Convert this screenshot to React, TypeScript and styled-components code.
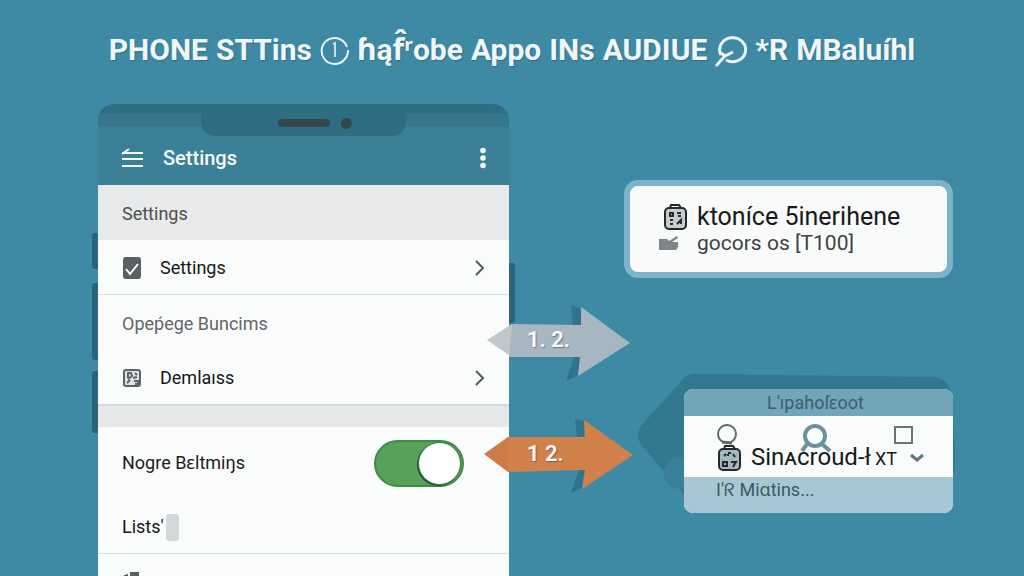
import React from "react";
import styled, { createGlobalStyle } from "styled-components";

const GlobalStyle = createGlobalStyle`
  *, *::before, *::after { box-sizing: border-box; }
  body {
    margin: 0;
    background: #3e8aa5;
    font-family: Roboto, "Noto Sans", "DejaVu Sans", sans-serif;
  }
  button, input { font: inherit; }
`;

const Page = styled.div`
  height: 100vh;
  overflow: hidden;
  display: flex;
  flex-direction: column;
`;

const Title = styled.h1`
  margin: 0;
  height: 104px;
  flex: none;
  padding: 30px 0 0;
  display: flex;
  justify-content: center;
  gap: 8px;
  color: #f0f5f6;
  font-size: 30px;
  line-height: 40px;
  font-weight: 700;
  white-space: nowrap;
  text-shadow: 1px 1px 1px #2b6f88;

  svg { flex: none; margin-top: 6px; }
`;

const Main = styled.main`
  flex: 1;
  min-height: 0;
  display: grid;
  grid-template-columns: 411fr 329fr;
  column-gap: 115px;
  padding: 0 71px 0 98px;
`;

const PhoneColumn = styled.div`
  position: relative;
  min-height: 0;
`;

const Phone = styled.section`
  height: 100%;
  display: flex;
  flex-direction: column;
  border-radius: 16px 16px 0 0;
  overflow: hidden;
  background: #3c8097;
`;

const Screen = styled.div`
  flex: 1;
  display: flex;
  flex-direction: column;
  background: #fafbfb;
`;

const SideKey = styled.span<{ $side: "left" | "right"; $top: number; $length: number }>`
  position: absolute;
  ${(p) => p.$side}: -6px;
  top: ${(p) => p.$top}px;
  width: 6px;
  height: ${(p) => p.$length}px;
  border-radius: ${(p) => (p.$side === "left" ? "3px 0 0 3px" : "0 3px 3px 0")};
  background: #2a657a;
`;

const Bezel = styled.div`
  height: 32px;
  flex: none;
  display: flex;
  justify-content: center;
  background: linear-gradient(#2f6d83 0 9px, #37778d 10px 22px, #3c8097 24px);
`;

const Notch = styled.div`
  width: 50%;
  height: 32px;
  display: flex;
  align-items: center;
  justify-content: center;
  gap: 11px;
  padding: 6px 0 0 22px;
  border-radius: 0 0 14px 14px;
  background: #2f6d83;
`;

const Speaker = styled.span`
  width: 52px;
  height: 8px;
  border-radius: 4px;
  background: #36474b;
`;

const Camera = styled.span`
  width: 11px;
  height: 11px;
  border-radius: 50%;
  background: #36474b;
`;

const AppBar = styled.header`
  height: 49px;
  flex: none;
  display: flex;
  align-items: center;
  padding: 0 20px 6px 23px;
  background: #3c8097;
  color: #f4f8f9;
`;

const IconButton = styled.button`
  display: flex;
  padding: 0;
  border: 0;
  background: none;
  color: inherit;
`;

const AppTitle = styled.h2`
  flex: 1;
  margin: 0 0 0 19px;
  font-size: 20px;
  line-height: 24px;
  font-weight: 500;
`;

const SectionLabel = styled.h3<{ $shaded?: boolean }>`
  margin: 0;
  height: 55px;
  flex: none;
  padding: 17px 24px 0;
  background: ${(p) => (p.$shaded ? "#e7e9ea" : "transparent")};
  color: ${(p) => (p.$shaded ? "#4c5052" : "#636668")};
  font-size: 18px;
  line-height: 24px;
  font-weight: 400;
`;

const Row = styled.button`
  height: 54px;
  flex: none;
  display: flex;
  align-items: center;
  gap: 18px;
  padding: 2px 23px 0 24px;
  border: 0;
  background: none;
  color: #151818;
  font-size: 18px;
  line-height: 24px;
  text-align: left;

  svg { flex: none; }
`;

const RowText = styled.span`
  flex: 1;
`;

const Rule = styled.hr`
  width: 100%;
  height: 1px;
  flex: none;
  margin: 0;
  border: 0;
  background: #dcdfe0;
`;

const Band = styled.div`
  height: 23px;
  flex: none;
  border-top: 2px solid #d5d8da;
  background: #e5e7e8;
`;

const SwitchRow = styled.label`
  height: 72px;
  flex: none;
  display: flex;
  align-items: center;
  justify-content: space-between;
  padding: 0 45px 0 24px;
  color: #1d2020;
  font-size: 18px;
  line-height: 24px;
`;

const Switch = styled.input`
  appearance: none;
  width: 90px;
  height: 47px;
  margin: 0;
  padding: 1px;
  display: flex;
  justify-content: flex-end;
  border: 2px solid #3f8b49;
  border-radius: 24px;
  background: #58a15b;

  &::before {
    content: "";
    width: 43px;
    height: 43px;
    margin-top: -1px;
    border: 1px solid #327a3c;
    border-radius: 50%;
    background: #fdfefe;
    box-shadow: -1px 1px 0 #23502b;
  }
`;

const Handle = styled.span`
  width: 13px;
  height: 27px;
  border-radius: 3px;
  background: #d3d9db;
`;

const ListRow = styled(Row)`
  gap: 2px;
`;

const Arrow = styled.div<{ $top: number }>`
  position: absolute;
  left: calc(100% - 25px);
  top: ${(p) => p.$top}px;
  width: 150px;
  height: 80px;

  svg { display: block; }
`;

const ArrowText = styled.span`
  position: absolute;
  left: 43px;
  top: 22px;
  color: #fbfbfb;
  font-size: 22px;
  line-height: 26px;
  font-weight: 600;
  white-space: pre;
  text-shadow: 1px 1px 1px rgba(50, 60, 70, 0.5);
`;

const Side = styled.aside`
  display: flex;
  flex-direction: column;
  padding-top: 76px;
`;

const InfoCard = styled.section`
  height: 98px;
  display: grid;
  grid-template-columns: 30px 1fr;
  column-gap: 8px;
  align-content: start;
  align-items: center;
  padding: 17px 20px 0 29px;
  border: 6px solid #7bb4ca;
  border-radius: 14px;
  background: #f9fafa;
  white-space: nowrap;

  svg:first-child { justify-self: end; }
`;

const CardTitle = styled.strong`
  color: #17191a;
  font-size: 25px;
  line-height: 28px;
  font-weight: 400;
`;

const CardText = styled.span`
  color: #3d4245;
  font-size: 21px;
  line-height: 24px;
`;

const Popup = styled.section`
  position: relative;
  margin: 111px 0 0 60px;
`;

const PopupShade = styled.svg`
  position: absolute;
  left: -47px;
  top: -16px;
`;

const PopupPanel = styled.div`
  position: relative;
  border-radius: 9px;
  overflow: hidden;
  background: #fafbfb;
`;

const PopupHead = styled.div`
  height: 27px;
  padding-right: 6px;
  background: #72a5b8;
  color: #3b5f6d;
  font-size: 18px;
  line-height: 27px;
  text-align: center;
`;

const PopupIcons = styled.div`
  height: 27px;
  display: flex;
  align-items: flex-start;
  justify-content: space-between;
  padding: 8px 39px 0 32px;

  svg { overflow: visible; }
`;

const PopupChoice = styled.button`
  width: 100%;
  height: 34px;
  display: flex;
  align-items: center;
  padding: 0 29px 4px 33px;
  border: 0;
  background: none;
  color: #17191a;
  font-size: 24px;
  line-height: 28px;
  white-space: nowrap;
`;

const ChoiceText = styled.span`
  flex: 1;
  margin-left: 8px;
  text-align: left;

  small { margin-left: 4px; font-size: 18px; }
`;

const PopupFoot = styled.div`
  height: 36px;
  padding: 1px 32px 0;
  background: #a6c7d3;
  color: #3c5965;
  font-size: 18px;
  line-height: 24px;
`;

const InfoIcon = () => (
  <svg width="29" height="29" viewBox="0 0 29 29" fill="none" stroke="#eaf3f5">
    <path d="M27 11A13 13 0 1 0 24 24A13 13 0 0 0 28 14" strokeWidth="2" />
    <path d="M13 8l2-1v14" strokeWidth="2" stroke="#c9dfe6" />
  </svg>
);

const TitleSearch = () => (
  <svg width="32" height="32" viewBox="0 0 32 32" fill="none" stroke="#eef5f6" strokeWidth="3">
    <path d="M6 19A13 12 0 1 1 11 24" strokeWidth="3" />
    <path d="M1 30L9 21M6 17l4 3 8-4" />
  </svg>
);

const MenuIcon = () => (
  <svg width="23" height="20" viewBox="0 0 23 20" fill="none" stroke="currentColor" strokeWidth="2">
    <path d="M1 6L8 1M1 5h21M1 11h21M1 18h21" />
  </svg>
);

const MoreIcon = () => (
  <svg width="12" height="22" viewBox="0 0 12 22" fill="currentColor">
    <circle cx="6" cy="3.5" r="2.8" />
    <circle cx="6" cy="11" r="2.8" />
    <circle cx="6" cy="18.5" r="2.8" />
  </svg>
);

const CheckIcon = () => (
  <svg width="20" height="24" viewBox="0 0 20 24">
    <rect x="1" y="1" width="18" height="22" rx="3" fill="#596163" />
    <path d="M4 13l4 5 8-10" fill="none" stroke="#fff" strokeWidth="2" />
  </svg>
);

const PictureIcon = () => (
  <svg width="20" height="20" viewBox="0 0 20 20" fill="none" stroke="#5c6466">
    <rect x="2" y="2" width="16" height="16" rx="2" strokeWidth="2" fill="#dfe3e4" />
    <path d="M5 5h4l1 3-4 3M6 5v5M13 5l2 2M11 10l4-1M12 13h4v3h-3M5 15l3-3" strokeWidth="2" />
  </svg>
);

const Chevron = () => (
  <svg width="12" height="16" viewBox="0 0 12 16" fill="none" stroke="#555a5c" strokeWidth="2">
    <path d="M2 1l7 7-7 7" />
  </svg>
);

const CornerIcon = () => (
  <svg width="20" height="20" viewBox="0 0 20 20" fill="#596163">
    <path d="M8 0h9v20H8zM2 3l4-1v18H2z" />
  </svg>
);

const TagIcon = ({ eyes }: { eyes?: boolean }) => (
  <svg width="26" height="28" viewBox="0 0 26 28" fill="none" stroke="#26292a">
    <path d="M7 5l1-3h8l2 3" strokeWidth="2" />
    <rect x="2" y="5" width="21" height="21" rx="4" strokeWidth="2" fill={eyes ? "#a3b7c0" : "#c7cccf"} />
    {eyes ? (
      <path d="M7 12l2-2M11 9h3M11 12v-2M16 10l2 3M6 18h4v4H6zM14 18h5l-3 5" strokeWidth="2" />
    ) : (
      <path d="M7 10h3v3H7zM14 10h4M15 13h3M7 17h3M7 21h3M14 21l4-4v4" strokeWidth="2" />
    )}
  </svg>
);

const HandIcon = () => (
  <svg width="20" height="14" viewBox="0 0 20 14" fill="#7d8588">
    <path d="M0 3h8l2 2 8-5 1 2-6 4h6v5l-2 3H0z" />
  </svg>
);

const arrows = {
  grey: {
    fill: "#a7b7c1",
    tail: "#bfc7cb",
    outline: "M28 19L97 20V2L146 38L94 71L96 52L25 52Z",
    tip: "M3 35L28 19V52Z",
    shade: "M87 0L97 4V20H89ZM90 52H96L94 70L82 76Z",
  },
  orange: {
    fill: "#d08049",
    tail: "#cb7b45",
    outline: "M23 18L101 18L100 1L149 36L98 70L101 51L24 53Z",
    tip: "M0 35L24 18V53Z",
    shade: "M91 0L100 2V18H93ZM95 51H101L98 69L87 74Z",
  },
};

const StepArrow = ({ kind, top, children }: { kind: keyof typeof arrows; top: number; children: string }) => {
  const a = arrows[kind];
  return (
    <Arrow $top={top}>
      <svg width="150" height="80" viewBox="0 0 150 80">
        <path d={a.shade} fill="#2f748c" />
        <path d={a.tip} fill={a.tail} />
        <path d={a.outline} fill={a.fill} />
      </svg>
      <ArrowText>{children}</ArrowText>
    </Arrow>
  );
};

export default function App() {
  return (
    <Page>
      <GlobalStyle />
      <Title>
        <span>PHONE</span>
        <span>STTins</span>
        <InfoIcon />
        <span>ɦąf̂ʳobe</span>
        <span>Appo</span>
        <span>INs</span>
        <span>AUDIUE</span>
        <TitleSearch />
        <span>*R</span>
        <span>MBaluíhl</span>
      </Title>
      <Main>
        <PhoneColumn>
          <SideKey $side="left" $top={129} $length={36} />
          <SideKey $side="left" $top={179} $length={77} />
          <SideKey $side="left" $top={267} $length={62} />
          <SideKey $side="right" $top={159} $length={60} />
          <Phone>
            <Bezel>
              <Notch>
                <Speaker />
                <Camera />
              </Notch>
            </Bezel>
            <AppBar>
              <IconButton aria-label="Menu"><MenuIcon /></IconButton>
              <AppTitle>Settings</AppTitle>
              <IconButton aria-label="More"><MoreIcon /></IconButton>
            </AppBar>
            <Screen>
              <SectionLabel $shaded>Settings</SectionLabel>
              <Row>
                <CheckIcon />
                <RowText>Settings</RowText>
                <Chevron />
              </Row>
              <Rule />
              <SectionLabel>Opeṕege Buncims</SectionLabel>
              <Row>
                <PictureIcon />
                <RowText>Demlaıss</RowText>
                <Chevron />
              </Row>
              <Band />
              <SwitchRow>
                Nogre Bɛltmiŋs
                <Switch type="checkbox" role="switch" defaultChecked />
              </SwitchRow>
              <ListRow>
                Lists'
                <Handle />
              </ListRow>
              <Rule />
              <Row aria-label="More settings">
                <CornerIcon />
              </Row>
            </Screen>
          </Phone>
          <StepArrow kind="grey" top={201}>1. 2.</StepArrow>
          <StepArrow kind="orange" top={315}>1 2.</StepArrow>
        </PhoneColumn>
        <Side>
          <InfoCard>
            <TagIcon />
            <CardTitle>ktoníce 5inerihene</CardTitle>
            <HandIcon />
            <CardText>gocors os [T100]</CardText>
          </InfoCard>
          <Popup>
            <PopupShade width="320" height="140" viewBox="0 0 320 140">
              <path
                d="M57 1L298 4Q312 6 314 20L318 76V98H300L56 132L4 72Q-2 62 4 53L44 8Q49 1 57 1Z"
                fill="#327890"
              />
              <circle cx="43" cy="100" r="16" fill="#3a8099" />
            </PopupShade>
            <PopupPanel>
              <PopupHead>L'ıpahoſɛoot</PopupHead>
              <PopupIcons>
                <svg width="22" height="22" viewBox="0 0 22 22" fill="none" stroke="#62696c">
                  <circle cx="11" cy="10" r="9" strokeWidth="2" />
                  <path d="M6 18l10 1" strokeWidth="3" />
                </svg>
                <svg width="32" height="28" viewBox="0 0 32 28" fill="none" stroke="#6d909d">
                  <circle cx="15" cy="12" r="10" strokeWidth="4" />
                  <path d="M7 20l-5 7M22 20l8 7" strokeWidth="4" />
                </svg>
                <svg width="20" height="20" viewBox="0 0 20 20" fill="none" stroke="#6b7376">
                  <rect x="1" y="3" width="17" height="16" strokeWidth="2" />
                </svg>
              </PopupIcons>
              <PopupChoice>
                <TagIcon eyes />
                <ChoiceText>Sinᴀcroud-ł<small>XT</small></ChoiceText>
                <svg width="14" height="10" viewBox="0 0 14 10" fill="none" stroke="#5f7880" strokeWidth="3">
                  <path d="M1 2l6 5 6-5" />
                </svg>
              </PopupChoice>
              <PopupFoot>I'ᖇ Miɑtins...</PopupFoot>
            </PopupPanel>
          </Popup>
        </Side>
      </Main>
    </Page>
  );
}
